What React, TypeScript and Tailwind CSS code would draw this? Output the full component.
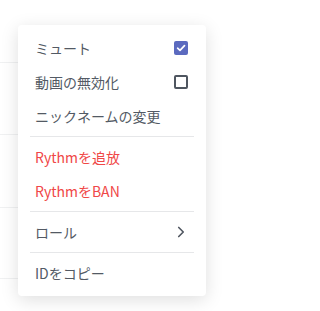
import { ChevronRight } from 'lucide-react'

const FONT = { fontFamily: '"Noto Sans CJK JP", "Noto Sans", sans-serif' }

function Checkbox({ checked }: { checked: boolean }) {
  if (checked) {
    return (
      <span className="flex h-[14px] w-[14px] items-center justify-center rounded-[2px] bg-[#5b6abf]">
        <svg width="10" height="10" viewBox="0 0 10 10" fill="none">
          <path d="M1.6 5.2 L4 7.4 L8.5 2.6" stroke="#fff" strokeWidth="1.7" strokeLinecap="round" strokeLinejoin="round" />
        </svg>
      </span>
    )
  }
  return <span className="h-[14px] w-[14px] rounded-[2px] border-2 border-[#4f5660]" />
}

function Item({
  label,
  danger,
  right,
}: {
  label: string
  danger?: boolean
  right?: React.ReactNode
}) {
  return (
    <div
      className={`flex h-[34px] items-center justify-between pl-[5px] pr-[6px] text-[14px] ${
        danger ? 'text-[#f04747]' : 'text-[#535a64]'
      }`}
    >
      <span>{label}</span>
      {right}
    </div>
  )
}

function Separator() {
  return <div className="my-[3px] h-px bg-[#e6e7e9]" />
}

export default function App() {
  return (
    <div className="relative h-[311px] w-[224px] overflow-hidden bg-white" style={FONT}>
      {/* list rows behind the menu */}
      <div className="flex w-[30px] flex-col pt-[62px]">
        <div className="h-[72px] border-t border-[#f0f1f2]" />
        <div className="h-[73px] border-t border-[#f0f1f2]" />
        <div className="h-[71px] border-t border-[#f0f1f2]" />
        <div className="h-[20px] border-t border-[#f0f1f2]" />
      </div>

      <div className="absolute left-[18px] top-[25px] w-[188px] rounded-[4px] bg-white px-[12px] py-[6px] shadow-[0_4px_18px_rgba(0,0,0,0.13)]">
        <Item label="ミュート" right={<Checkbox checked />} />
        <Item label="動画の無効化" right={<Checkbox checked={false} />} />
        <Item label="ニックネームの変更" />
        <Separator />
        <Item label="Rythmを追放" danger />
        <Item label="RythmをBAN" danger />
        <Separator />
        <Item
          label="ロール"
          right={<ChevronRight size={18} strokeWidth={2.2} className="mr-[-2px] text-[#4f5660]" />}
        />
        <Separator />
        <Item label="IDをコピー" />
      </div>
    </div>
  )
}
